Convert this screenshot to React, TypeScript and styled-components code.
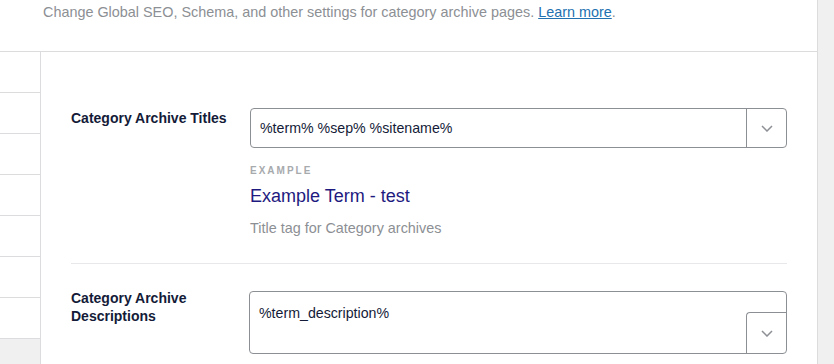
import React from "react";
import styled, { createGlobalStyle } from "styled-components";

const GlobalStyle = createGlobalStyle`
  html, body {
    margin: 0;
    padding: 0;
    background: #ffffff;
  }
  body {
    font-family: "Liberation Sans", Arial, sans-serif;
    color: #141b38;
  }
`;

const Page = styled.div`
  display: flex;
  width: 834px;
  height: 364px;
  overflow: hidden;
`;

const Main = styled.div`
  flex: 1;
  display: flex;
  flex-direction: column;
  border-right: 1px solid #dcdcde;
  min-width: 0;
`;

const Scrollbar = styled.div`
  width: 16px;
  background: #f0f0f1;
`;

const Header = styled.div`
  height: 52px;
  box-sizing: border-box;
  padding: 2px 0 0 43px;
  border-bottom: 1px solid #dcdcde;
  font-size: 14.4px;
  line-height: 20px;
  color: #8c8f94;
  white-space: nowrap;

  a {
    color: #2271b1;
    text-decoration: underline;
  }
`;

const Body = styled.div`
  flex: 1;
  display: flex;
  min-height: 0;
`;

const Sidebar = styled.div`
  width: 40px;
  border-right: 1px solid #dcdcde;
  display: flex;
  flex-direction: column;
  background: #f0f0f1;
`;

const SideItem = styled.div`
  height: 40px;
  flex-shrink: 0;
  background: #ffffff;
  border-bottom: 1px solid #dcdcde;
`;

const Content = styled.div`
  flex: 1;
  padding: 56px 30px 0 30px;
`;

const Row = styled.div<{ $divider?: boolean }>`
  display: grid;
  grid-template-columns: 179px 1fr;
  padding-bottom: ${(p) => (p.$divider ? "26px" : "0")};
  border-bottom: ${(p) => (p.$divider ? "1px solid #e8e8eb" : "none")};
  margin-bottom: ${(p) => (p.$divider ? "27px" : "0")};
`;

const Label = styled.div<{ $offset?: number }>`
  font-size: 14px;
  font-weight: 700;
  line-height: 18px;
  margin-top: ${(p) => p.$offset ?? 1}px;
  padding-right: 10px;
`;

const Field = styled.div`
  display: flex;
  flex-direction: column;
`;

const InputBox = styled.div<{ $tall?: boolean }>`
  position: relative;
  display: flex;
  height: ${(p) => (p.$tall ? "63px" : "40px")};
  box-sizing: border-box;
  border: 1px solid #8c8f94;
  border-radius: 4px;
  margin-left: ${(p) => (p.$tall ? "-1px" : "0")};
`;

const InputText = styled.div<{ $tall?: boolean }>`
  flex: 1;
  font-size: 14.2px;
  line-height: 18px;
  padding: ${(p) => (p.$tall ? "12px 9px" : "10px 9px")};
  color: #141b38;
`;

const DropButton = styled.div<{ $corner?: boolean }>`
  width: 40px;
  display: flex;
  align-items: center;
  justify-content: center;
  border-left: 1px solid #8c8f94;
  box-sizing: border-box;
  ${(p) =>
    p.$corner
      ? `
    position: absolute;
    right: 0;
    bottom: 0;
    height: 41px;
    border-top: 1px solid #8c8f94;
    border-top-left-radius: 4px;
  `
      : ""}
`;

const ExampleTag = styled.div`
  margin-top: 17px;
  font-size: 10px;
  font-weight: 700;
  letter-spacing: 2px;
  line-height: 12px;
  color: #a7aaad;
`;

const ExampleTitle = styled.div`
  margin-top: 7px;
  font-size: 18px;
  line-height: 24px;
  color: #1e1a80;
`;

const Hint = styled.div`
  margin-top: 11px;
  font-size: 14.4px;
  line-height: 18px;
  color: #8c8f94;
`;

const Chevron = () => (
  <svg width="12" height="7" viewBox="0 0 12 7" fill="none">
    <path d="M1 1l5 5 5-5" stroke="#8c8f94" strokeWidth="1.5" />
  </svg>
);

export default function App() {
  return (
    <>
      <GlobalStyle />
      <Page>
        <Main>
          <Header>
            Change Global SEO, Schema, and other settings for category archive pages.{" "}
            <a href="#">Learn more</a>.
          </Header>
          <Body>
            <Sidebar>
              {Array.from({ length: 7 }).map((_, i) => (
                <SideItem key={i} />
              ))}
            </Sidebar>
            <Content>
              <Row $divider>
                <Label>Category Archive Titles</Label>
                <Field>
                  <InputBox>
                    <InputText>%term% %sep% %sitename%</InputText>
                    <DropButton>
                      <Chevron />
                    </DropButton>
                  </InputBox>
                  <ExampleTag>EXAMPLE</ExampleTag>
                  <ExampleTitle>Example Term - test</ExampleTitle>
                  <Hint>Title tag for Category archives</Hint>
                </Field>
              </Row>
              <Row>
                <Label $offset={-2}>
                  Category Archive
                  <br />
                  Descriptions
                </Label>
                <Field>
                  <InputBox $tall>
                    <InputText $tall>%term_description%</InputText>
                    <DropButton $corner>
                      <Chevron />
                    </DropButton>
                  </InputBox>
                </Field>
              </Row>
            </Content>
          </Body>
        </Main>
        <Scrollbar />
      </Page>
    </>
  );
}
